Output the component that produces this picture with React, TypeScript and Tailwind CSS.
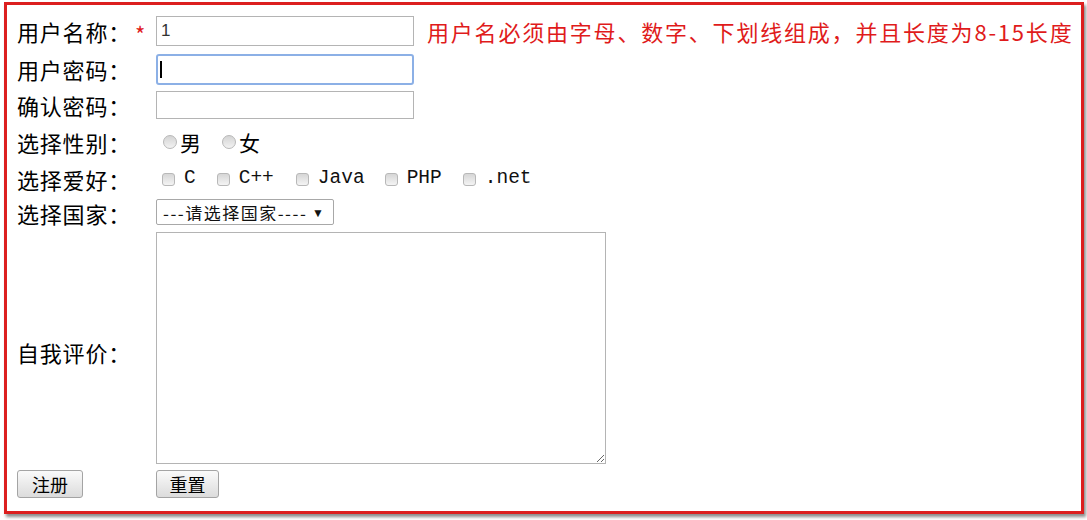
import React from 'react';

const cjk = "font-['Noto_Sans_CJK_SC',sans-serif]";

function Label({ children }: { children: React.ReactNode }) {
  return (
    <div className={`w-[139px] shrink-0 text-[22px] leading-none tracking-[0.8px] text-black ${cjk}`}>{children}</div>
  );
}

function Radio({ label }: { label: string }) {
  return (
    <label className="flex items-center gap-[3px] mr-[21px]">
      <input
        type="radio"
        name="sex"
        className="appearance-none w-[14px] h-[14px] rounded-full border border-[#b8b8b8] bg-gradient-to-b from-[#d4d4d4] to-[#f2f2f2] m-0"
      />
      <span className={`text-[21px] leading-none ${cjk}`}>{label}</span>
    </label>
  );
}

function Check({ label, gap }: { label: string; gap: string }) {
  return (
    <label className={`flex items-center gap-[9px] ${gap}`}>
      <input
        type="checkbox"
        className="appearance-none w-[13px] h-[13px] rounded-[3px] border border-[#b8b8b8] bg-gradient-to-b from-[#d6d6d6] to-[#f4f4f4] m-0"
      />
      <span className="text-[19.5px] leading-none font-['Liberation_Mono',monospace] text-[#111]">{label}</span>
    </label>
  );
}

export default function App() {
  return (
    <div className="w-[1087px] h-[520px] bg-white pt-[2px] pl-[4px]">
      <div className="w-[1080px] h-[512px] border-[3px] border-[#dc1f1f] shadow-[2px_3px_3px_rgba(0,0,0,0.45)] pl-[10px] pt-[10px] flex flex-col">
        {/* 用户名称 */}
        <div className="flex items-center h-[32px]">
          <Label>
            用户名称：<span className="text-[#e01b1b] text-[22px] ml-[4px] relative top-[2px]">*</span>
          </Label>
          <input
            type="text"
            defaultValue="1"
            className="w-[258px] h-[30px] border border-[#b4b4b4] px-[4px] text-[17px] font-['Liberation_Sans',sans-serif] text-[#333] outline-none"
          />
          <span className={`ml-[13px] text-[22px] leading-none text-[#e01b1b] tracking-[1.8px] ${cjk}`}>
            用户名必须由字母、数字、下划线组成，并且长度为8-15长度
          </span>
        </div>

        {/* 用户密码 */}
        <div className="flex items-center h-[32px] mt-[6px]">
          <Label>用户密码：</Label>
          <div className="relative">
            <input
              type="password"
              className="w-[258px] h-[31px] border-[2px] border-[#8cb0e6] rounded-[3px] outline-none"
            />
            <div className="absolute left-[4px] top-[7px] w-[2px] h-[17px] bg-black" />
          </div>
        </div>

        {/* 确认密码 */}
        <div className="flex items-start h-[30px] mt-[6px]">
          <div className="pt-[3px]">
            <Label>确认密码：</Label>
          </div>
          <input type="password" className="w-[258px] h-[28px] border border-[#b4b4b4] outline-none" />
        </div>

        {/* 性别 */}
        <div className="flex items-center h-[36px] mt-[3px]">
          <Label>选择性别：</Label>
          <div className="flex items-center pl-[7px]">
            <Radio label="男" />
            <Radio label="女" />
          </div>
        </div>

        {/* 爱好 */}
        <div className="flex items-center h-[38px]">
          <Label>选择爱好：</Label>
          <div className="flex items-center pl-[6px]">
            <Check label="C" gap="mr-[21px]" />
            <Check label="C++" gap="mr-[22px]" />
            <Check label="Java" gap="mr-[20px]" />
            <Check label="PHP" gap="mr-[21px]" />
            <Check label=".net" gap="" />
          </div>
        </div>

        {/* 国家 */}
        <div className="flex items-center h-[27px] mt-[1px]">
          <Label>选择国家：</Label>
          <div className="relative">
            <select
              className={`appearance-none w-[178px] h-[26px] border border-[#a8a8a8] rounded-[2px] bg-white pl-[6px] text-[17px] leading-none tracking-[1.5px] text-[#111] outline-none ${cjk}`}
            >
              <option>---请选择国家----</option>
              <option>中国</option>
              <option>美国</option>
            </select>
            <span className="pointer-events-none absolute right-[10px] top-[5px] text-[12px] text-[#111]">▼</span>
          </div>
        </div>

        {/* 自我评价 */}
        <div className="flex items-center mt-[6px]">
          <div className="pt-[8px]">
            <Label>自我评价：</Label>
          </div>
          <textarea className="w-[450px] h-[232px] border border-[#b4b4b4] outline-none" />
        </div>

        {/* 按钮 */}
        <div className="flex items-center mt-[6px]">
          <div className="w-[139px] shrink-0">
            <button
              type="button"
              className={`w-[66px] h-[28px] border border-[#a4a4a4] rounded-[3px] bg-gradient-to-b from-[#fafafa] to-[#dcdcdc] text-[18px] leading-none text-black ${cjk}`}
            >
              注册
            </button>
          </div>
          <button
            type="reset"
            className={`w-[63px] h-[28px] border border-[#a4a4a4] rounded-[3px] bg-gradient-to-b from-[#fafafa] to-[#dcdcdc] text-[18px] leading-none text-black ${cjk}`}
          >
            重置
          </button>
        </div>
      </div>
    </div>
  );
}
